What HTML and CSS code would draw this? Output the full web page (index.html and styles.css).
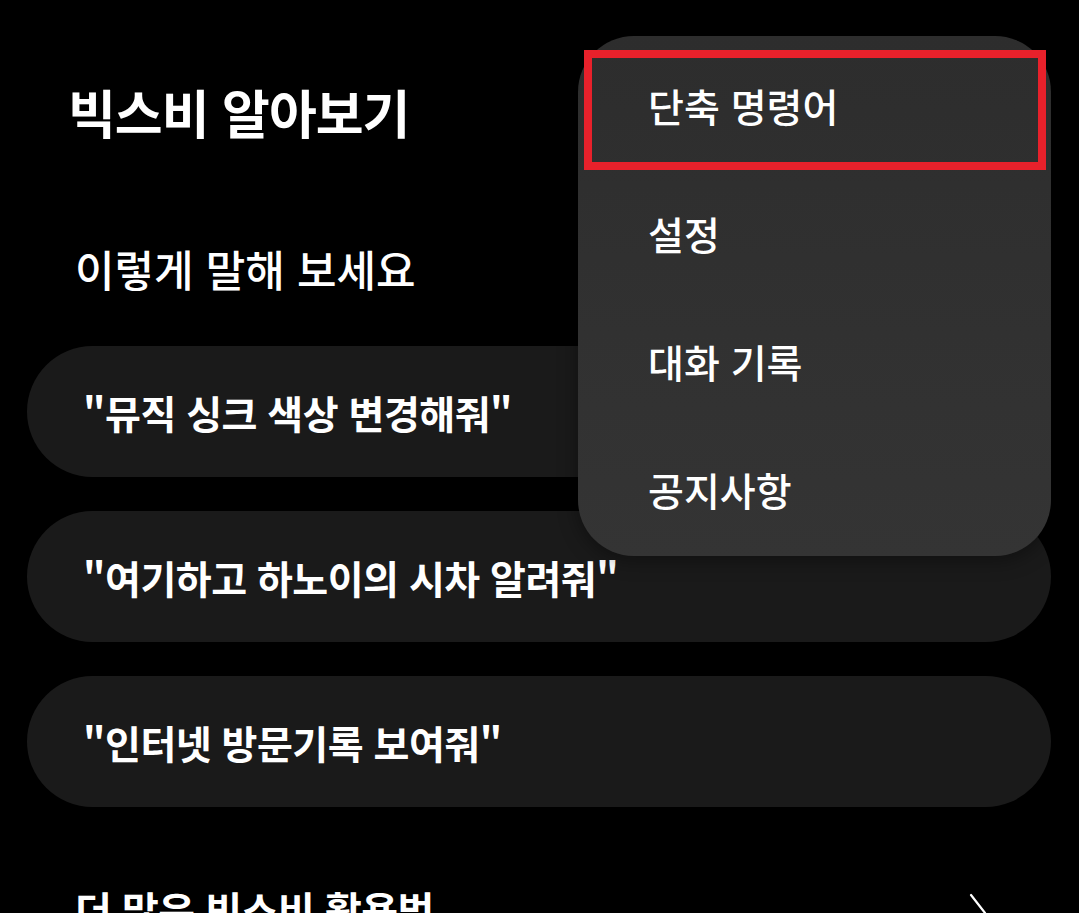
FILE: index.html
```html
<!DOCTYPE html>
<html lang="ko">
<head>
<meta charset="utf-8">
<link rel="stylesheet" href="styles.css">
</head>
<body>
<div class="page">
  <h1 class="title">빅스비 알아보기</h1>
  <h2 class="subtitle">이렇게 말해 보세요</h2>
  <ul class="pills">
    <li class="pill">"뮤직 싱크 색상 변경해줘"</li>
    <li class="pill">"여기하고 하노이의 시차 알려줘"</li>
    <li class="pill">"인터넷 방문기록 보여줘"</li>
  </ul>
  <div class="more">
    <span class="more-text">더 많은 빅스비 활용법</span>
    <svg class="chev" width="24" height="40" viewBox="0 0 24 40"><polyline points="4,2 18,20 4,38" fill="none" stroke="#fff" stroke-width="2.2" stroke-linecap="round" stroke-linejoin="round"/></svg>
  </div>
  <div class="menu">
    <div class="menu-item">단축 명령어</div>
    <div class="menu-item">설정</div>
    <div class="menu-item">대화 기록</div>
    <div class="menu-item">공지사항</div>
    <div class="highlight"></div>
  </div>
</div>
</body>
</html>
```
FILE: styles.css
```css
html, body {
  margin: 0;
  padding: 0;
  background: #000;
  color: #fff;
  font-family: "Noto Sans CJK KR", "Noto Sans", sans-serif;
}
.page {
  position: relative;
  width: 1079px;
  height: 913px;
  overflow: hidden;
  padding: 0 28px 0 27px;
  box-sizing: border-box;
}
.title {
  margin: 80px 0 0 41px;
  font-size: 52px;
  font-weight: 700;
  line-height: 64px;
  letter-spacing: -1px;
}
.subtitle {
  margin: 96px 0 0 48px;
  font-size: 43px;
  font-weight: 500;
  line-height: 56px;
  letter-spacing: 0;
}
.pills {
  list-style: none;
  margin: 50px 0 0 0;
  padding: 0;
  display: flex;
  flex-direction: column;
  gap: 34px;
}
.pill {
  height: 131px;
  border-radius: 66px;
  background: #1a1a1a;
  display: flex;
  align-items: center;
  padding-left: 56px;
  font-size: 39px;
  font-weight: 700;
  letter-spacing: -0.5px;
}
.more {
  margin-top: 74px;
  display: flex;
  align-items: flex-start;
  justify-content: space-between;
  padding: 0 60px 0 48px;
}
.more-text {
  font-size: 40px;
  font-weight: 700;
  line-height: 56px;
  letter-spacing: -0.5px;
}
.chev {
  margin-top: 12px;
}
.menu {
  position: absolute;
  left: 578px;
  top: 36px;
  width: 473px;
  height: 520px;
  box-sizing: border-box;
  padding-top: 5px;
  border-radius: 56px;
  background: linear-gradient(#2d2d2d, #343434);
  box-shadow: 0 4px 20px rgba(0,0,0,0.4);
}
.menu-item {
  height: 128px;
  display: flex;
  align-items: center;
  padding-left: 70px;
  font-size: 39px;
  font-weight: 500;
  letter-spacing: 0;
}
.highlight {
  position: absolute;
  left: 6px;
  top: 14px;
  width: 462px;
  height: 120px;
  box-sizing: border-box;
  border: 8px solid #e8212b;
}
```
